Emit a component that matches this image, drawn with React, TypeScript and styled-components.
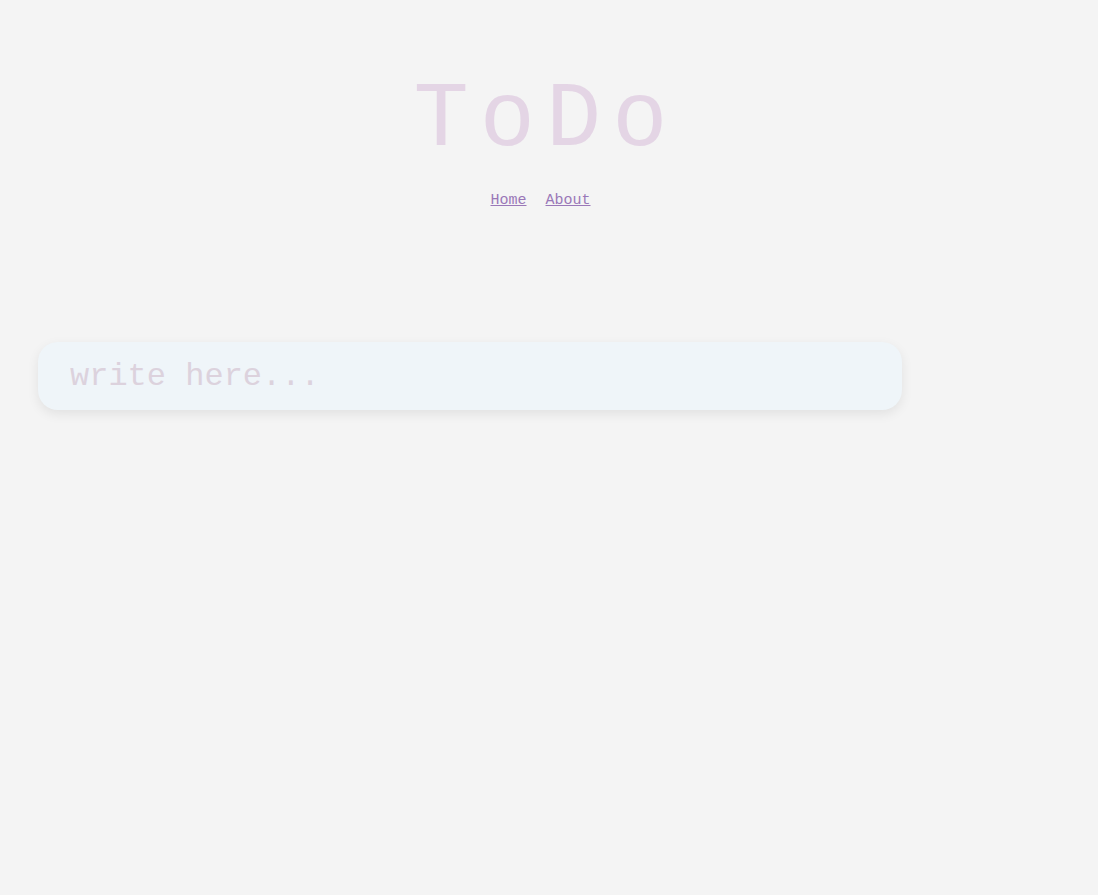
import React from "react";
import styled, { createGlobalStyle } from "styled-components";

const Global = createGlobalStyle`
  html, body { margin: 0; padding: 0; background: #f4f4f4; }
  body { font-family: "Courier New", "Liberation Mono", monospace; }
`;

const Page = styled.div`
  min-height: 895px;
  background: #f4f4f4;
  display: flex;
  flex-direction: column;
`;

const Header = styled.header`
  display: flex;
  flex-direction: column;
  align-items: center;
  padding-top: 66px;
  padding-right: 17px;
`;

const Title = styled.h1`
  margin: 0;
  font-family: "Courier New", "Liberation Mono", monospace;
  font-weight: 400;
  font-size: 92px;
  line-height: 110px;
  color: #e4d5e5;
  letter-spacing: 11px;
  padding-left: 11px;
`;

const Nav = styled.nav`
  display: flex;
  gap: 19px;
  margin-top: 16px;
`;

const NavLink = styled.a`
  font-family: "Courier New", "Liberation Mono", monospace;
  font-size: 15px;
  color: #9a78b8;
  text-decoration: underline;
`;

const Form = styled.form`
  margin-top: 133px;
  padding-left: 38px;
`;

const Input = styled.input`
  box-sizing: border-box;
  width: 864px;
  height: 68px;
  border: none;
  outline: none;
  border-radius: 20px;
  background: #eff5f9;
  box-shadow: 0 4px 12px rgba(0, 0, 0, 0.08);
  padding: 0 32px;
  font-family: "Courier New", "Liberation Mono", monospace;
  font-size: 32px;
  color: #a090a8;
  &::placeholder {
    color: #dcd2dd;
  }
`;

export default function App() {
  return (
    <Page>
      <Global />
      <Header>
        <Title>ToDo</Title>
        <Nav>
          <NavLink href="#">Home</NavLink>
          <NavLink href="#">About</NavLink>
        </Nav>
      </Header>
      <Form onSubmit={(e) => e.preventDefault()}>
        <Input placeholder="write here..." />
      </Form>
    </Page>
  );
}
